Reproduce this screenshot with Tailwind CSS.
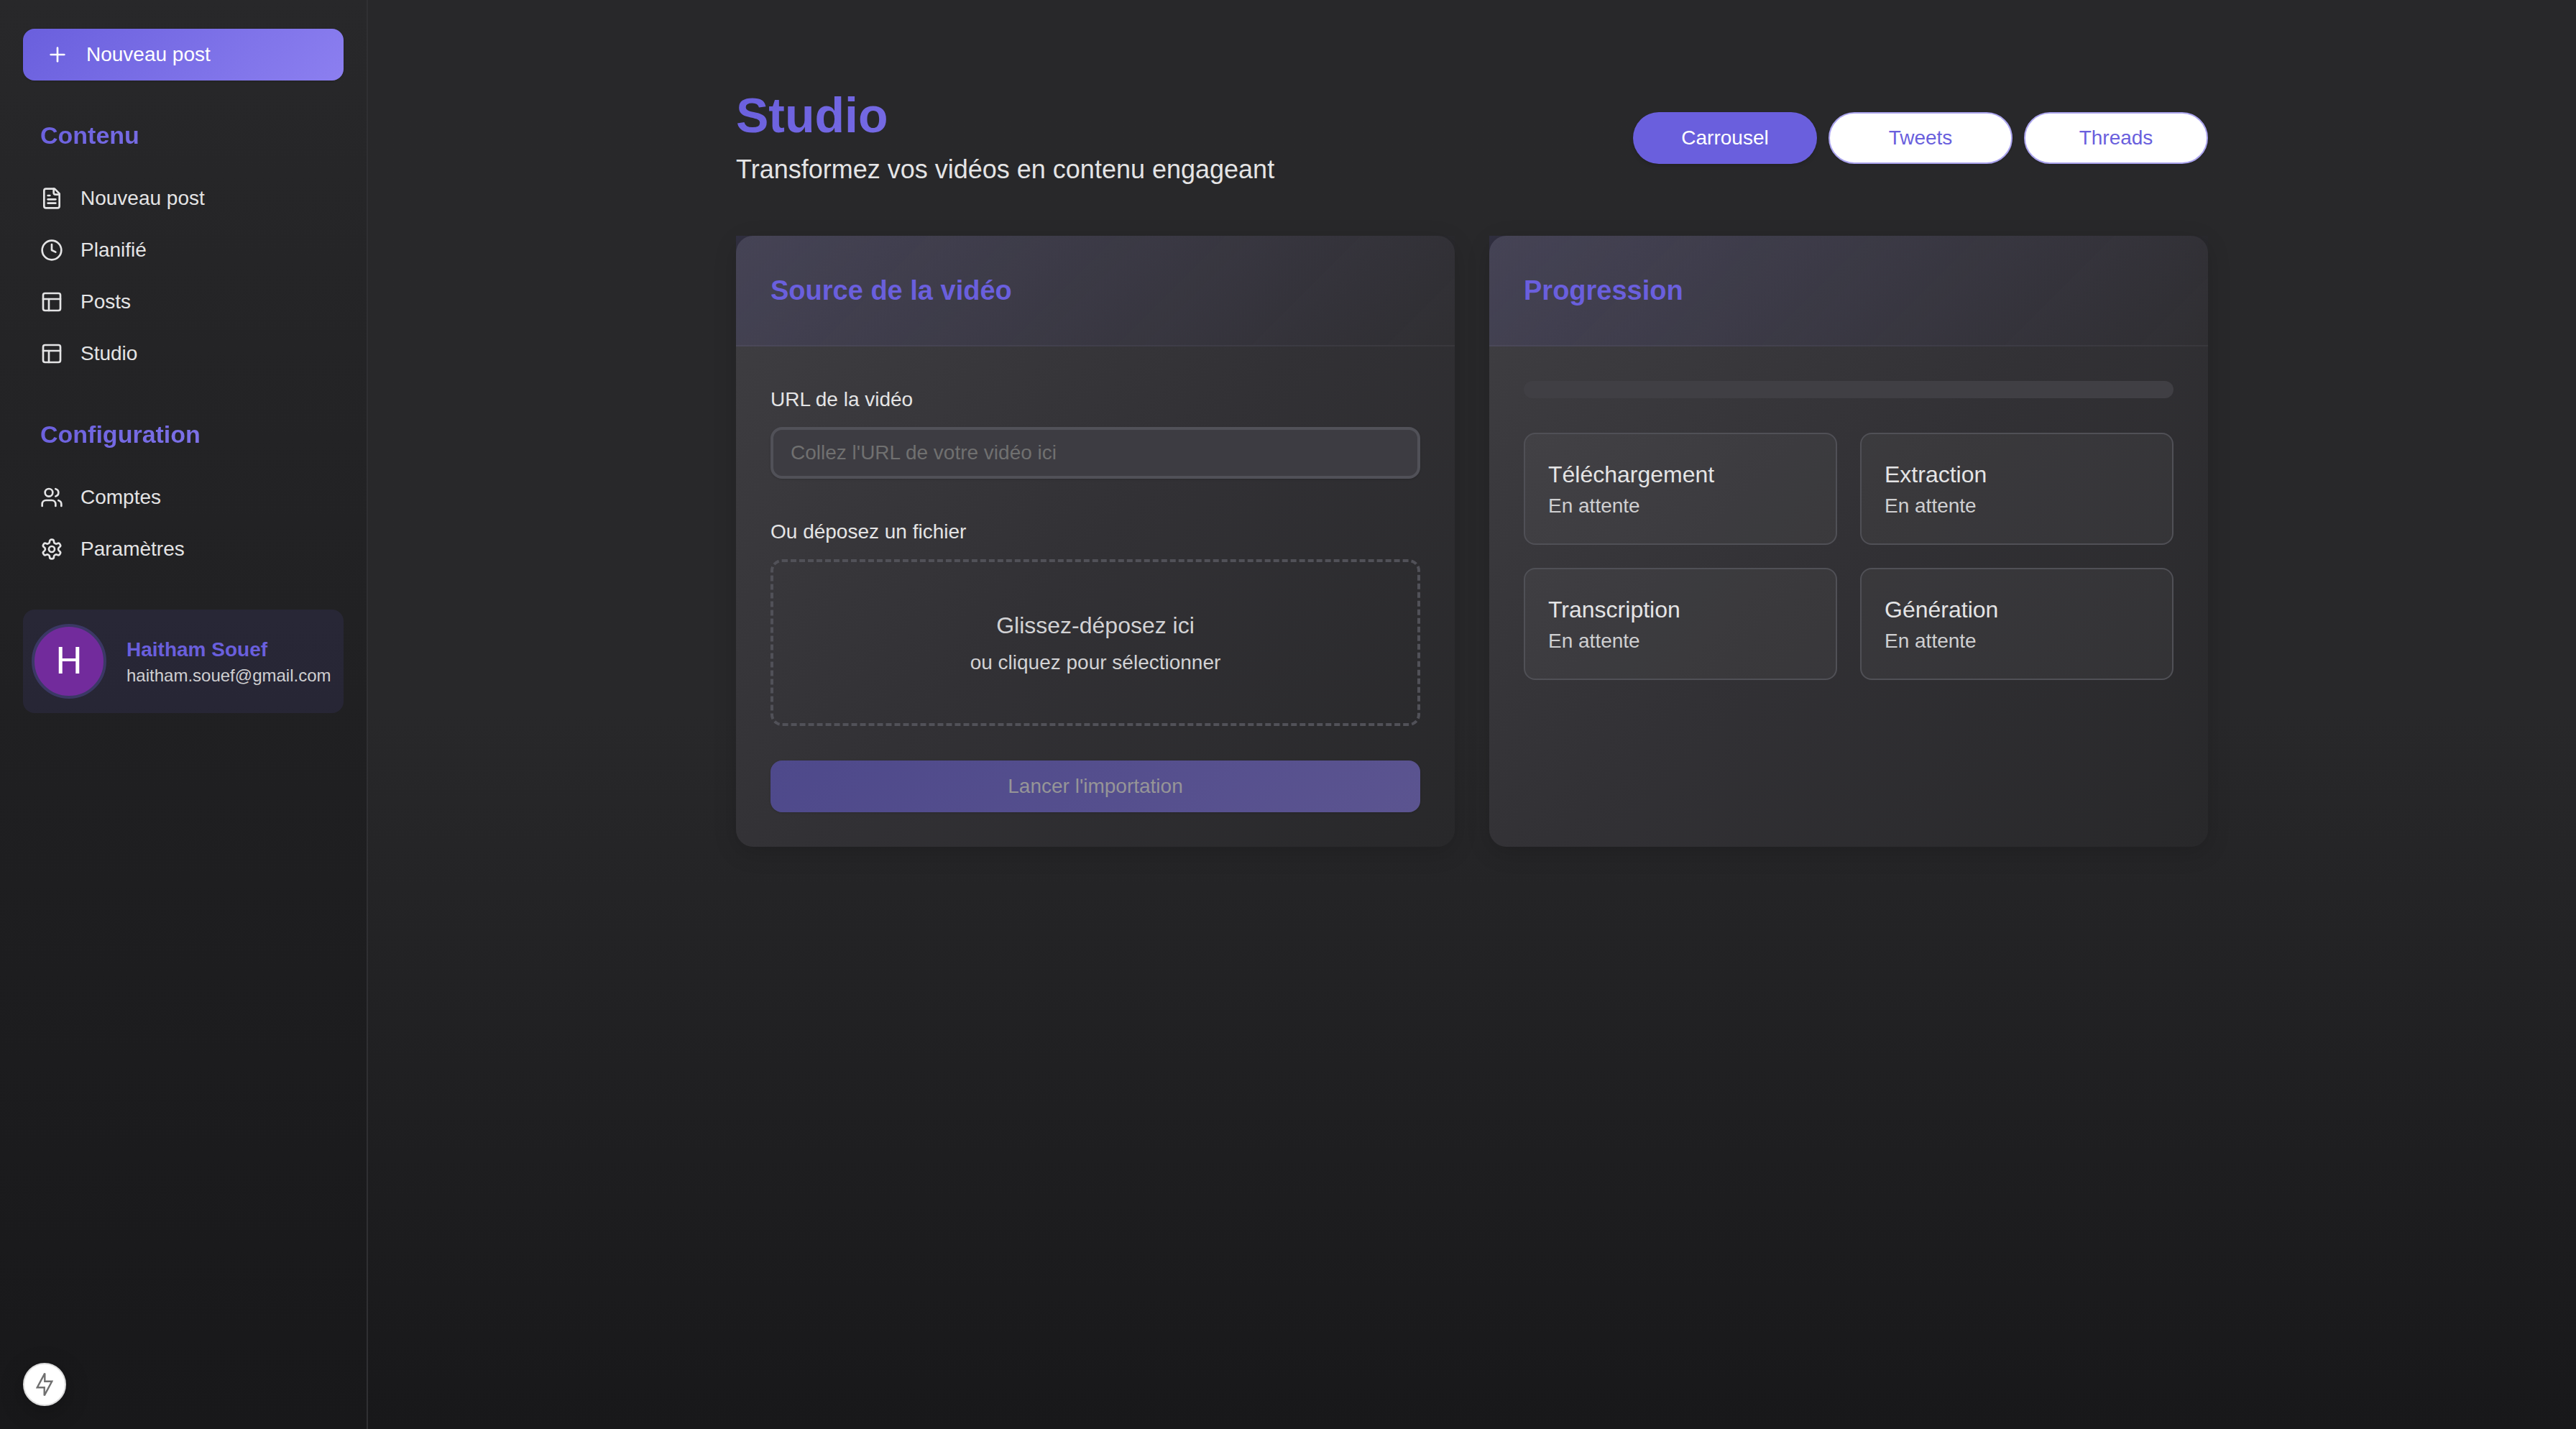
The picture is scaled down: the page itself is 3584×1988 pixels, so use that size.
<!DOCTYPE html>
<html lang="fr">
<head>
<meta charset="utf-8">
<meta name="viewport" content="width=device-width, initial-scale=1">
<title>Studio</title>
<script src="https://cdn.jsdelivr.net/npm/@tailwindcss/browser@4"></script>
</head>
<body class="flex min-h-screen bg-[#19191a] bg-linear-to-b from-[#28282a] from-50% to-[#18181a] font-['Liberation_Sans',Arial,sans-serif] text-[28px] leading-10 text-[#e4e4e5]">

  <aside class="flex w-128 shrink-0 flex-col gap-12 border-r-2 border-[#303033] bg-linear-to-b from-[#28282a] to-[#18181a] px-8 py-10">
    <button type="button" class="flex h-18 w-full items-center gap-6 rounded-2xl bg-linear-135 from-[#6a5fdd] to-[#8c7ff0] px-8 text-white shadow-sm">
      <svg class="size-8" viewBox="0 0 24 24" fill="none" stroke="currentColor" stroke-width="2" stroke-linecap="round" stroke-linejoin="round" aria-hidden="true"><path d="M5 12h14"/><path d="M12 5v14"/></svg>
      Nouveau post
    </button>

    <nav aria-labelledby="nav-contenu">
      <h2 id="nav-contenu" class="mx-6 mb-6 bg-linear-135 from-[#6a5fdd] to-[#8c7ff0] bg-clip-text text-[34px] leading-14 font-bold text-transparent">Contenu</h2>
      <a href="#nouveau" class="flex h-18 items-center gap-6 px-6">
        <svg class="size-8" viewBox="0 0 24 24" fill="none" stroke="currentColor" stroke-width="2" stroke-linecap="round" stroke-linejoin="round" aria-hidden="true"><path d="M15 2H6a2 2 0 0 0-2 2v16a2 2 0 0 0 2 2h12a2 2 0 0 0 2-2V7Z"/><path d="M14 2v4a2 2 0 0 0 2 2h4"/><path d="M10 9H8"/><path d="M16 13H8"/><path d="M16 17H8"/></svg>
        Nouveau post
      </a>
      <a href="#planifie" class="flex h-18 items-center gap-6 px-6">
        <svg class="size-8" viewBox="0 0 24 24" fill="none" stroke="currentColor" stroke-width="2" stroke-linecap="round" stroke-linejoin="round" aria-hidden="true"><circle cx="12" cy="12" r="10"/><path d="M12 6v6l4 2"/></svg>
        Planifié
      </a>
      <a href="#posts" class="flex h-18 items-center gap-6 px-6">
        <svg class="size-8" viewBox="0 0 24 24" fill="none" stroke="currentColor" stroke-width="2" stroke-linecap="round" stroke-linejoin="round" aria-hidden="true"><rect width="18" height="18" x="3" y="3" rx="2"/><path d="M3 9h18"/><path d="M9 21V9"/></svg>
        Posts
      </a>
      <a href="#studio" class="flex h-18 items-center gap-6 px-6">
        <svg class="size-8" viewBox="0 0 24 24" fill="none" stroke="currentColor" stroke-width="2" stroke-linecap="round" stroke-linejoin="round" aria-hidden="true"><rect width="18" height="18" x="3" y="3" rx="2"/><path d="M3 9h18"/><path d="M9 21V9"/></svg>
        Studio
      </a>
    </nav>

    <nav aria-labelledby="nav-config">
      <h2 id="nav-config" class="mx-6 mb-6 bg-linear-135 from-[#6a5fdd] to-[#8c7ff0] bg-clip-text text-[34px] leading-14 font-bold text-transparent">Configuration</h2>
      <a href="#comptes" class="flex h-18 items-center gap-6 px-6">
        <svg class="size-8" viewBox="0 0 24 24" fill="none" stroke="currentColor" stroke-width="2" stroke-linecap="round" stroke-linejoin="round" aria-hidden="true"><path d="M16 21v-2a4 4 0 0 0-4-4H6a4 4 0 0 0-4 4v2"/><circle cx="9" cy="7" r="4"/><path d="M22 21v-2a4 4 0 0 0-3-3.87"/><path d="M16 3.13a4 4 0 0 1 0 7.75"/></svg>
        Comptes
      </a>
      <a href="#parametres" class="flex h-18 items-center gap-6 px-6">
        <svg class="size-8" viewBox="0 0 24 24" fill="none" stroke="currentColor" stroke-width="2" stroke-linecap="round" stroke-linejoin="round" aria-hidden="true"><path d="M12.22 2h-.44a2 2 0 0 0-2 2v.18a2 2 0 0 1-1 1.73l-.43.25a2 2 0 0 1-2 0l-.15-.08a2 2 0 0 0-2.73.73l-.22.38a2 2 0 0 0 .73 2.73l.15.1a2 2 0 0 1 1 1.72v.51a2 2 0 0 1-1 1.74l-.15.09a2 2 0 0 0-.73 2.73l.22.38a2 2 0 0 0 2.73.73l.15-.08a2 2 0 0 1 2 0l.43.25a2 2 0 0 1 1 1.73V20a2 2 0 0 0 2 2h.44a2 2 0 0 0 2-2v-.18a2 2 0 0 1 1-1.73l.43-.25a2 2 0 0 1 2 0l.15.08a2 2 0 0 0 2.73-.73l.22-.39a2 2 0 0 0-.73-2.73l-.15-.08a2 2 0 0 1-1-1.74v-.5a2 2 0 0 1 1-1.74l.15-.09a2 2 0 0 0 .73-2.73l-.22-.38a2 2 0 0 0-2.73-.73l-.15.08a2 2 0 0 1-2 0l-.43-.25a2 2 0 0 1-1-1.73V4a2 2 0 0 0-2-2z"/><circle cx="12" cy="12" r="3"/></svg>
        Paramètres
      </a>
    </nav>

    <div class="flex h-36 items-center gap-7 rounded-2xl bg-[#6a5fdd]/10 pl-3">
      <div class="flex size-26 shrink-0 items-center justify-center rounded-full border-4 border-[#3b3865] bg-[#722b9c] font-[Roboto,sans-serif] text-[52px] text-white" aria-hidden="true">H</div>
      <div>
        <p class="leading-10 font-bold text-[#6a5fdd]">Haitham Souef</p>
        <p class="text-2xl leading-8 text-[#cfcfd1]">haitham.souef@gmail.com</p>
      </div>
    </div>
  </aside>

  <main class="min-w-0 flex-1 px-8 py-30">
    <div class="mx-auto max-w-512">
      <header class="mb-16 flex items-center justify-between">
        <div>
          <h1 class="mb-2 bg-linear-135 from-[#6a5fdd] to-[#8c7ff0] bg-clip-text text-[68px] leading-20 font-bold text-transparent">Studio</h1>
          <p class="text-4xl leading-14">Transformez vos vidéos en contenu engageant</p>
        </div>
        <div class="flex gap-4">
          <button type="button" class="h-18 w-64 rounded-full bg-[#6a5fdd] text-white shadow-md">Carrousel</button>
          <button type="button" class="h-18 w-64 rounded-full border-2 border-[#aaa3ed] bg-white text-[#6a5fdd] shadow-sm">Tweets</button>
          <button type="button" class="h-18 w-64 rounded-full border-2 border-[#aaa3ed] bg-white text-[#6a5fdd] shadow-sm">Threads</button>
        </div>
      </header>

      <div class="grid grid-cols-2 gap-12">
        <section class="rounded-3xl bg-linear-135 from-[#403f43] via-[#323135] to-[#28282a] shadow-[0_8px_32px_rgba(0,0,0,0.15)]">
          <div class="border-b-2 border-white/4 bg-linear-135 from-[#6a5fdd]/12 to-[#6a5fdd]/0 p-12">
            <h2 class="text-[38px] leading-14 font-bold text-[#6a5fdd]">Source de la vidéo</h2>
          </div>
          <form class="flex flex-col gap-12 p-12">
            <div class="flex flex-col gap-3">
              <label for="url" class="leading-13">URL de la vidéo</label>
              <input id="url" type="url" placeholder="Collez l'URL de votre vidéo ici" class="h-18 w-full rounded-2xl border-4 border-[#515158] bg-[#3d3c42] px-6 shadow-sm placeholder:text-[#707070]">
            </div>
            <div class="flex flex-col gap-3">
              <label for="fichier" class="leading-13">Ou déposez un fichier</label>
              <label for="fichier" class="flex flex-col gap-2 rounded-2xl border-4 border-dashed border-[#515158] py-16 text-center text-[#d2d2d4]">
                <span class="text-[32px] leading-12">Glissez-déposez ici</span>
                <span>ou cliquez pour sélectionner</span>
                <input id="fichier" type="file" class="sr-only">
              </label>
            </div>
            <button type="submit" disabled class="h-18 w-full rounded-2xl bg-linear-135 from-[#4e498b] to-[#5b5490] text-[#969597] shadow-sm">Lancer l'importation</button>
          </form>
        </section>

        <section class="rounded-3xl bg-linear-135 from-[#403f43] via-[#323135] to-[#28282a] shadow-[0_8px_32px_rgba(0,0,0,0.15)]">
          <div class="border-b-2 border-white/4 bg-linear-135 from-[#6a5fdd]/12 to-[#6a5fdd]/0 p-12">
            <h2 class="text-[38px] leading-14 font-bold text-[#6a5fdd]">Progression</h2>
          </div>
          <div class="flex flex-col gap-12 p-12">
            <div role="progressbar" aria-label="Progression" aria-valuenow="0" aria-valuemin="0" aria-valuemax="100" class="h-6 rounded-full bg-[#403f44]"></div>
            <ul class="grid grid-cols-2 gap-8">
              <li class="rounded-2xl border-2 border-[#505056] bg-white/4 p-8">
                <p class="text-[32px] leading-12">Téléchargement</p>
                <p class="text-[#cfcfd1]">En attente</p>
              </li>
              <li class="rounded-2xl border-2 border-[#505056] bg-white/4 p-8">
                <p class="text-[32px] leading-12">Extraction</p>
                <p class="text-[#cfcfd1]">En attente</p>
              </li>
              <li class="rounded-2xl border-2 border-[#505056] bg-white/4 p-8">
                <p class="text-[32px] leading-12">Transcription</p>
                <p class="text-[#cfcfd1]">En attente</p>
              </li>
              <li class="rounded-2xl border-2 border-[#505056] bg-white/4 p-8">
                <p class="text-[32px] leading-12">Génération</p>
                <p class="text-[#cfcfd1]">En attente</p>
              </li>
            </ul>
          </div>
        </section>
      </div>
    </div>
  </main>

  <button type="button" aria-label="Outils de développement" class="fixed bottom-8 left-8 flex size-15 items-center justify-center rounded-full border-2 border-[#dcdcdc] bg-white shadow-[0_8px_32px_rgba(0,0,0,0.25)]">
    <svg class="h-8 w-6" viewBox="0 0 24 32" fill="none" stroke="#707070" stroke-width="2.4" aria-hidden="true"><path d="M12.3 .6V11.8H22.2L11.7 31.4V20.2H1.8Z"/></svg>
  </button>
</body>
</html>
